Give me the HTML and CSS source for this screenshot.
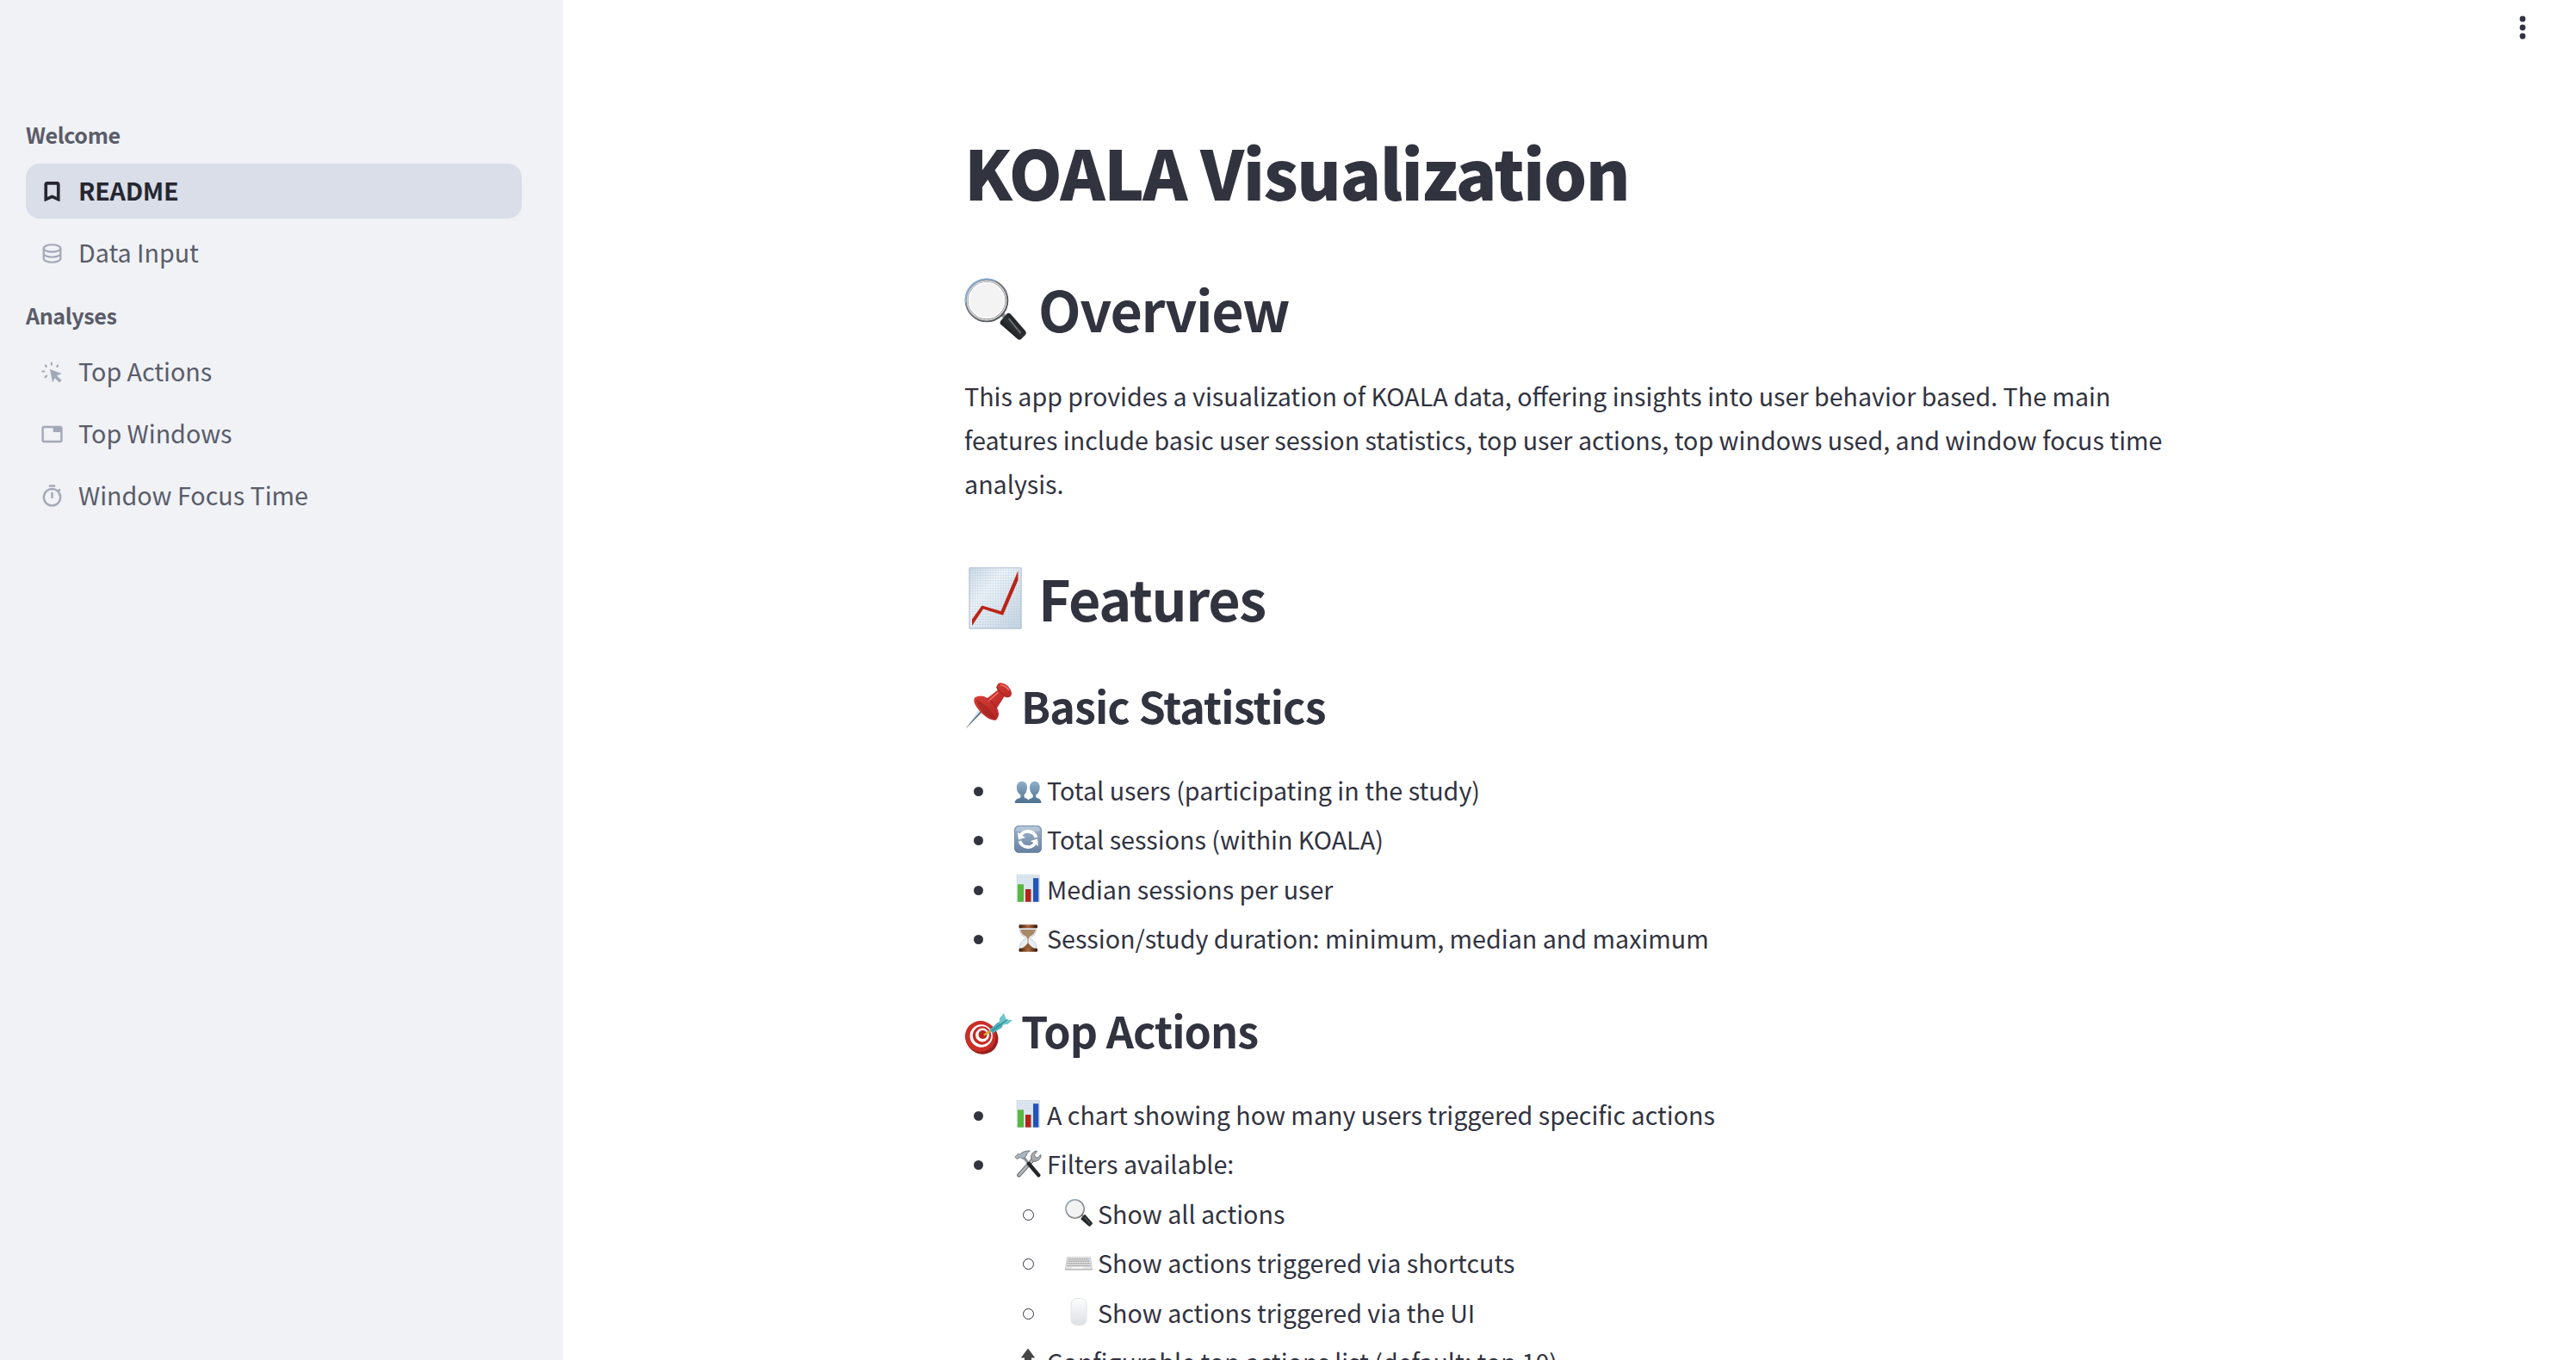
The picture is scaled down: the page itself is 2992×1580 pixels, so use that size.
FILE: index.html
```html
<!DOCTYPE html>
<html lang="en">

<head>
  <meta charset="UTF-8">
  <meta name="viewport" content="width=device-width, initial-scale=1.0">
  <title>KOALA Visualization</title>
  <link rel="stylesheet" href="styles.css">
</head>

<body>
  <!-- shared emoji drawings -->
  <svg class="defs" width="0" height="0">
    <defs>
      <linearGradient id="gPaper" x1="0" y1="0" x2="1" y2="1">
        <stop offset="0" stop-color="#cfdae4"/><stop offset=".35" stop-color="#f1f5f8"/><stop offset="1" stop-color="#c6d3de"/>
      </linearGradient>
      <linearGradient id="gRim" x1="0" y1="0" x2="1" y2="1">
        <stop offset="0" stop-color="#7d93ab"/><stop offset=".4" stop-color="#77797c"/><stop offset="1" stop-color="#4c4f52"/>
      </linearGradient>
      <linearGradient id="gHandle" x1="0" y1="1" x2="1" y2="0">
        <stop offset="0" stop-color="#050505"/><stop offset=".5" stop-color="#2e3235"/><stop offset="1" stop-color="#0c0c0c"/>
      </linearGradient>
      <linearGradient id="gBlue" x1="0" y1="0" x2="0" y2="1">
        <stop offset="0" stop-color="#8fb0cb"/><stop offset="1" stop-color="#4e708f"/>
      </linearGradient>
      <linearGradient id="gButton" x1="0" y1="0" x2="0" y2="1">
        <stop offset="0" stop-color="#a3b8cf"/><stop offset="1" stop-color="#657f9e"/>
      </linearGradient>
      <linearGradient id="gRed" x1="0" y1="0" x2="1" y2="1">
        <stop offset="0" stop-color="#e2453b"/><stop offset="1" stop-color="#a81e20"/>
      </linearGradient>
      <linearGradient id="gWood" x1="0" y1="0" x2="1" y2="0">
        <stop offset="0" stop-color="#3c1a0c"/><stop offset=".5" stop-color="#b0683b"/><stop offset="1" stop-color="#2e1409"/>
      </linearGradient>
      <linearGradient id="gMouse" x1="0" y1="0" x2="0" y2="1">
        <stop offset="0" stop-color="#fdfdfd"/><stop offset="1" stop-color="#dce1e6"/>
      </linearGradient>
      <pattern id="grid" width="3" height="3" patternUnits="userSpaceOnUse">
        <path d="M3 0H0V3" fill="none" stroke="#a9c6e4" stroke-width=".55"/>
      </pattern>
    </defs>

    <symbol id="magnifier" viewBox="0 0 72 72">
      <path d="M44 42l7 7" stroke="#8b8e91" stroke-width="5"/>
      <path d="M42.500 49.500l7.500-8.500q2-1 4 1l17 19.500q1.500 2.500 0 4.500l-5 5q-2 1.500-4 0L42 53.500q-1-2 .5-4z" fill="url(#gHandle)"/>
      <path d="M51.500 47l14 17" stroke="#74797e" stroke-width="1.600"/>
      <circle cx="26" cy="26" r="23.300" fill="#f3f3f3" stroke="url(#gRim)" stroke-width="4"/>
      <circle cx="26" cy="26" r="22.600" fill="none" stroke="#d9dadb" stroke-width="1.600"/>
      <circle cx="26" cy="26" r="20.500" fill="none" stroke="#fff" stroke-width="1.500"/>
      <path d="M1.500 29A24.800 24.800 0 0 1 36 3" fill="none" stroke="#8eb4e3" stroke-width="1.400"/>
    </symbol>

    <symbol id="chart-up" viewBox="0 0 72 72">
      <path d="M5.500 .5h61v71h-61z" fill="url(#gPaper)"/>
      <path d="M5.500 .5h61v71h-61z" fill="url(#grid)"/>
      <path d="M6 .8h60v70.400H6z" fill="none" stroke="#aebfcf"/>
      <path d="M9 60.500L20.500 44.500l22 6.500L62.500 4v11L45 55.800l-23-7.300L9 68z" fill="#b92418"/>
    </symbol>

    <symbol id="pushpin" viewBox="0 0 56 56">
      <path d="M1.500 54.800L20.500 29l3.500 3z" fill="#5d6c7b"/>
      <path d="M3.500 51.500L20 29.500l2 1.500z" fill="#cfe3f5"/>
      <path d="M12 18.500q7-4 15 .5l12-9.500-1.500-3Q38 1 43 1.300q10 2 12 12 0 5-5 5l-3.500-1L38 30.500q4.500 8-1 14-6.500 1-14-5.500T12 25.500q-1.500-4 0-7z" fill="url(#gRed)"/>
      <path d="M13 20.500q5 1 12.500 8t11 15q-7-1-13-6.500T13 20.500z" fill="#9c2420" opacity=".6"/>
      <path d="M37.500 6q2.500 6 12 12M27 19.500q5 3 10.500 11" fill="none" stroke="#a52122" stroke-width="1.200"/>
      <path d="M28.500 22l11-9.500M42 4q6 0 10 6" stroke="#f2786c" stroke-width="1.500" fill="none"/>
    </symbol>

    <symbol id="target" viewBox="0 0 56 56">
      <ellipse cx="20.500" cy="37" rx="19.300" ry="18.300" transform="rotate(40 20.500 37)" fill="#98201c"/>
      <circle cx="18.800" cy="35" r="17.900" fill="#cb2d27"/>
      <circle cx="19.700" cy="34.500" r="13.200" fill="#fff"/>
      <circle cx="20.500" cy="34" r="10.700" fill="#c42a25"/>
      <circle cx="21" cy="33.500" r="7.900" fill="#fff"/>
      <circle cx="21.500" cy="33" r="5" fill="#b9221f"/>
      <path d="M23 33.500l9-6" stroke="#d6a62c" stroke-width="2.400"/>
      <path d="M29.500 27.500l9-8.500 5-1.500 2.500 2.500-2.500 5-11 6.500z" fill="#4fafb9"/>
      <path d="M40.500 19.500L41 14l5-6 2 5.500.5 2 7.500.5-5.500 5-8 .5z" fill="#6fc5cc"/>
      <path d="M32 28.500l18-13" stroke="#2e8793" stroke-width="1.200"/>
    </symbol>

    <symbol id="users" viewBox="0 0 32 32">
      <path d="M.7 32q0-4 3.800-5.300 2.500-.8 3-1.800V22.500Q3 20 2.800 13.500 3 7.300 8.800 6.800q5.900.2 6.200 6.700-.2 6-3.500 9V25q.7 1 3 1.700 2.700 1 2.900 5.300z" fill="url(#gBlue)"/>
      <path d="M15.500 32q0-4 3.200-5.300 2.600-.8 3-1.800v-2.400q-3.700-3-3.700-9 .3-6.200 6-6.700 5.500.5 5.700 6.700-.2 6.500-4.500 9V25q.7 1 3.300 1.700 2.800 1.300 3 5.300z" fill="url(#gBlue)"/>
    </symbol>

    <symbol id="refresh" viewBox="0 0 32 32">
      <rect x=".4" y=".4" width="31.200" height="31.200" rx="5" fill="url(#gButton)" stroke="#60789a" stroke-width=".8"/>
      <path d="M2 6q1-4.500 5-4.500h18q4 0 5 4.500-14 4-28 0z" fill="#fff" opacity=".25"/>
      <path d="M7 12.500A10 10 0 0 1 25.500 14M25 19.500A10 10 0 0 1 6.500 18" fill="none" stroke="#fff" stroke-width="3.800"/>
      <path d="M4 8l1 8.500 8-2.500zM28 24l-1-8.500-8 2.500z" fill="#fff"/>
    </symbol>

    <symbol id="bars" viewBox="0 0 32 32">
      <path d="M3 .3h26.500v31.400H3z" fill="#dfe7ee" stroke="#c3d0db" stroke-width=".5"/>
      <path d="M3 .3h26.500v31.400H3z" fill="url(#grid)" opacity=".5"/>
      <path d="M4 11.300h7v20.400H4z" fill="#56b83c"/>
      <path d="M13 17h6.500v14.700H13z" fill="#b3251b"/>
      <path d="M22 4.200h6.300v27.500H22z" fill="#2554b8"/>
    </symbol>

    <symbol id="hourglass" viewBox="0 0 32 32">
      <path d="M6.500 4v3q0 5 6 8 2 1 0 2.200Q6.500 20 6.500 25.500V28h19v-2.500q0-5.500-6-8.300-2-1.200 0-2.200 6-3 6-8V4z" fill="#e9edf4" stroke="#b9bdca" stroke-width=".7"/>
      <path d="M7.200 6h17.600q-.5 5-6.800 8l-1.200 2.500h-1.600L14 14Q7.500 11 7.200 6z" fill="#a98865"/>
      <path d="M16 16v7" stroke="#b38a61"/>
      <path d="M16 21.500q2.500 3.500 7.500 6.500h-15q5-3 7.500-6.500z" fill="#8b5e37"/>
      <rect x="5.500" y=".3" width="21.500" height="4" rx="1.300" fill="url(#gWood)"/>
      <rect x="5.500" y="27.700" width="21.500" height="4" rx="1.300" fill="url(#gWood)"/>
    </symbol>

    <symbol id="tools" viewBox="0 0 32 32">
      <path d="M5.500 29.300L22 11" stroke="#55595d" stroke-width="4.600" stroke-linecap="round"/>
      <path d="M5.500 29.300L22 11" stroke="#b2b5b8" stroke-width="2.800" stroke-linecap="round"/>
      <path d="M19.500 10q-.5-7 6-9l1 .5-3 4 1 3 3 .5 3-3.500.8 1.500q-1.500 6-8.500 6.500z" fill="#a9adb1" stroke="#5f6468" stroke-width=".8"/>
      <path d="M11 8.500l5.500 7" stroke="#8f9498" stroke-width="3.200"/>
      <path d="M17 16l11.300 13.300" stroke="#232527" stroke-width="4.400" stroke-linecap="round"/>
      <path d="M.8 8l3.700-3.500 2 .5Q11 .5 18.500 1q-4 1.500-4.500 6l-4 3.500-3-2-4 2z" fill="#a9b4bd" stroke="#656c72" stroke-width=".8"/>
    </symbol>

    <symbol id="keyboard" viewBox="0 0 32 32">
      <path d="M2.500 9.500h27l2 13.500v1.300H.5V23z" fill="#e6e6e6" stroke="#bdbdbd" stroke-width=".6"/>
      <path d="M3.500 11.700h25M3 14.200h26M2.500 16.800h27M2.200 19.400h27.600" stroke="#a3a3a3" stroke-width="1.500" stroke-dasharray="1.500 .5"/>
      <path d="M8 21.800h13" stroke="#fff" stroke-width="1.500"/>
      <path d="M.5 23.700h31" stroke="#b0b0b0"/>
    </symbol>

    <symbol id="mouse" viewBox="0 0 32 32">
      <rect x="7" y=".5" width="18" height="31" rx="6.500" fill="url(#gMouse)" stroke="#e2e4e7"/>
    </symbol>

    <symbol id="arrow-up" viewBox="0 0 32 32">
      <path d="M16 .5l8.200 11H20V31h-8V11.500H7.800z" fill="#464646"/>
    </symbol>
  </svg>

  <div class="app">
    <nav class="sidebar">
      <h4 class="section">Welcome</h4>
      <a class="item active">
        <svg viewBox="0 0 24 24"><path d="M5 21V5q0-.825.588-1.412T7 3h10q.825 0 1.413.588T19 5v16l-7-3zm2-3.050l5-2.150 5 2.150V5H7z" stroke="currentColor" stroke-width="1" stroke-linejoin="round"/></svg>
        <span>README</span>
      </a>
      <a class="item">
        <svg viewBox="0 0 24 24" class="line"><ellipse cx="12" cy="7" rx="8.100" ry="3.500"/><path d="M3.900 7v10q0 1.500 2.500 2.500T12 20.500t5.600-1T20.100 17V7M3.900 12q0 1.500 2.500 2.500t5.600 1 5.600-1T20.100 12"/></svg>
        <span>Data Input</span>
      </a>
      <h4 class="section">Analyses</h4>
      <a class="item">
        <svg viewBox="0 0 24 24"><path d="M10.300 9.500l10.200 3.800-4.200 2 4.500 4.400-1.900 1.900-4.400-4.500-1.900 4z" stroke="currentColor" stroke-width=".6"/><path d="M11.500 3v1.600M5.700 5.300l.7 1.300M17.500 5.300l-.7 1.300M2.800 11.200h1.700M6.700 15.300l-1.200 1.500" class="tick"/></svg>
        <span>Top Actions</span>
      </a>
      <a class="item">
        <svg viewBox="0 0 24 24"><path d="M4 20q-.825 0-1.412-.587T2 18V6q0-.825.588-1.412T4 4h16q.825 0 1.413.588T22 6v12q0 .825-.587 1.413T20 20zm0-2h16v-8h-7V6H4z"/></svg>
        <span>Top Windows</span>
      </a>
      <a class="item">
        <svg viewBox="0 0 24 24"><path d="M9 3V1h6v2zm2 11h2V8h-2zm1 8q-1.850 0-3.488-.712T5.650 19.350t-1.937-2.863T3 13t.713-3.488T5.650 6.650t2.863-1.937T12 4q1.550 0 2.975.5t2.675 1.450l1.400-1.400 1.400 1.400-1.400 1.400Q20 8.600 20.500 10.025T21 13q0 1.850-.712 3.488T18.350 19.350t-2.863 1.938T12 22m0-2q2.900 0 4.950-2.050T19 13t-2.050-4.950T12 6 7.050 8.050 5 13t2.050 4.950T12 20"/></svg>
        <span>Window Focus Time</span>
      </a>
    </nav>

    <main class="main">
      <svg class="menu" viewBox="0 0 8 28"><circle cx="4" cy="4" r="3.400"/><circle cx="4" cy="14" r="3.400"/><circle cx="4" cy="24" r="3.400"/></svg>

      <div class="content">
        <h1>KOALA Visualization</h1>

        <h2><svg><use href="#magnifier"/></svg>Overview</h2>
        <p>This app provides a visualization of KOALA data, offering insights into user behavior based. The main features include basic user session statistics, top user actions, top windows used, and window focus time analysis.</p>

        <h2><svg><use href="#chart-up"/></svg>Features</h2>

        <h3><svg><use href="#pushpin"/></svg>Basic Statistics</h3>
        <ul>
          <li><svg><use href="#users"/></svg>Total users (participating in the study)</li>
          <li><svg><use href="#refresh"/></svg>Total sessions (within KOALA)</li>
          <li><svg><use href="#bars"/></svg>Median sessions per user</li>
          <li><svg><use href="#hourglass"/></svg>Session/study duration: minimum, median and maximum</li>
        </ul>

        <h3><svg><use href="#target"/></svg>Top Actions</h3>
        <ul>
          <li><svg><use href="#bars"/></svg>A chart showing how many users triggered specific actions</li>
          <li><svg><use href="#tools"/></svg>Filters available:</li>
          <li class="nested">
            <ul>
              <li><svg><use href="#magnifier"/></svg>Show all actions</li>
              <li><svg><use href="#keyboard"/></svg>Show actions triggered via shortcuts</li>
              <li><svg><use href="#mouse"/></svg>Show actions triggered via the UI</li>
            </ul>
          </li>
          <li class="plain"><svg><use href="#arrow-up"/></svg>Configurable top actions list (default: top 10)</li>
        </ul>
      </div>
    </main>
  </div>
</body>

</html>
```
FILE: styles.css
```css
* {
  box-sizing: border-box;
}

body {
  margin: 0;
  height: 100vh;
  overflow: hidden;
  background: #fff;
  color: #31333f;
  font-family: "Noto Sans CJK SC", "Noto Sans", sans-serif;
  font-size: 28.66px;
}

h1, h2, h3, h4, p, ul {
  margin: 0;
  padding: 0;
}

.defs {
  position: absolute;
}

.app {
  display: flex;
  height: 100vh;
}

/* sidebar */
.sidebar {
  width: 654px;
  flex-shrink: 0;
  padding: 134px 48px 0 30px;
  background: #f0f2f6;
}

.section {
  height: 44px;
  margin-bottom: 12px;
  line-height: 44px;
  font-size: 25.1px;
  font-weight: 700;
  letter-spacing: -0.4px;
  color: #5a5c69;
}

.item + .section {
  margin-top: 18px;
}

.item {
  display: flex;
  align-items: center;
  gap: 16px;
  height: 64px;
  margin-bottom: 8px;
  padding-left: 16px;
  border-radius: 16px;
  color: #5a5c69;
}

.item svg {
  width: 29px;
  height: 29px;
  margin-top: 1px;
  fill: currentColor;
  color: #a3a8b8;
}

.item span {
  margin-top: -3px;
}

.item .line, .item .tick {
  fill: none;
  stroke: currentColor;
  stroke-width: 1.8;
  stroke-linecap: round;
}

.item.active {
  background: #dadee9;
  color: #262730;
  font-weight: 700;
  letter-spacing: -0.3px;
}

.item.active svg {
  color: #262730;
}

/* main area */
.main {
  position: relative;
  flex: 1;
  height: 100vh;
  overflow: hidden;
}

.menu {
  position: absolute;
  top: 18px;
  right: 58px;
  width: 8px;
  height: 28px;
  fill: #31333f;
}

.content {
  width: 1406px;
  margin: 0 auto;
  padding-top: 146px;
}

h1 {
  height: 106px;
  line-height: 106px;
  font-size: 79px;
  font-weight: 900;
  letter-spacing: -1.5px;
}

h2, h3, li {
  display: flex;
  align-items: center;
}

h2 {
  height: 86px;
  margin-top: 63px;
  line-height: 86px;
  font-size: 64.5px;
  font-weight: 700;
  letter-spacing: -1.4px;
}

h2 svg {
  width: 72px;
  height: 72px;
  margin: 2px 14px 0 0;
}

h3 {
  height: 67px;
  margin-top: 47px;
  line-height: 67px;
  font-size: 50.2px;
  font-weight: 700;
  letter-spacing: -0.9px;
}

h3 svg {
  width: 56px;
  height: 56px;
  margin: 2px 10px 0 0;
}

p {
  margin-top: 33px;
  line-height: 51.2px;
}

p + h2 {
  margin-top: 63px;
}

h2 + h3 {
  margin-top: 49px;
}

h3 + ul {
  margin-top: 39px;
}

li {
  height: 51.2px;
  margin-bottom: 6.4px;
  padding-left: 58px;
  line-height: 51.2px;
}

li li {
  padding-left: 57px;
}

li svg {
  width: 32px;
  height: 32px;
  margin-right: 6px;
}

/* bullets */
li::before {
  content: "";
  width: 11px;
  height: 11px;
  margin: 4px 36px 0 -47px;
  border-radius: 50%;
  background: #31333f;
}

.nested {
  display: block;
  height: auto;
}

.plain::before {
  visibility: hidden;
}

.nested::before {
  content: none;
}

.nested li::before {
  border: 1px solid #31333f;
  background: none;
}
```
